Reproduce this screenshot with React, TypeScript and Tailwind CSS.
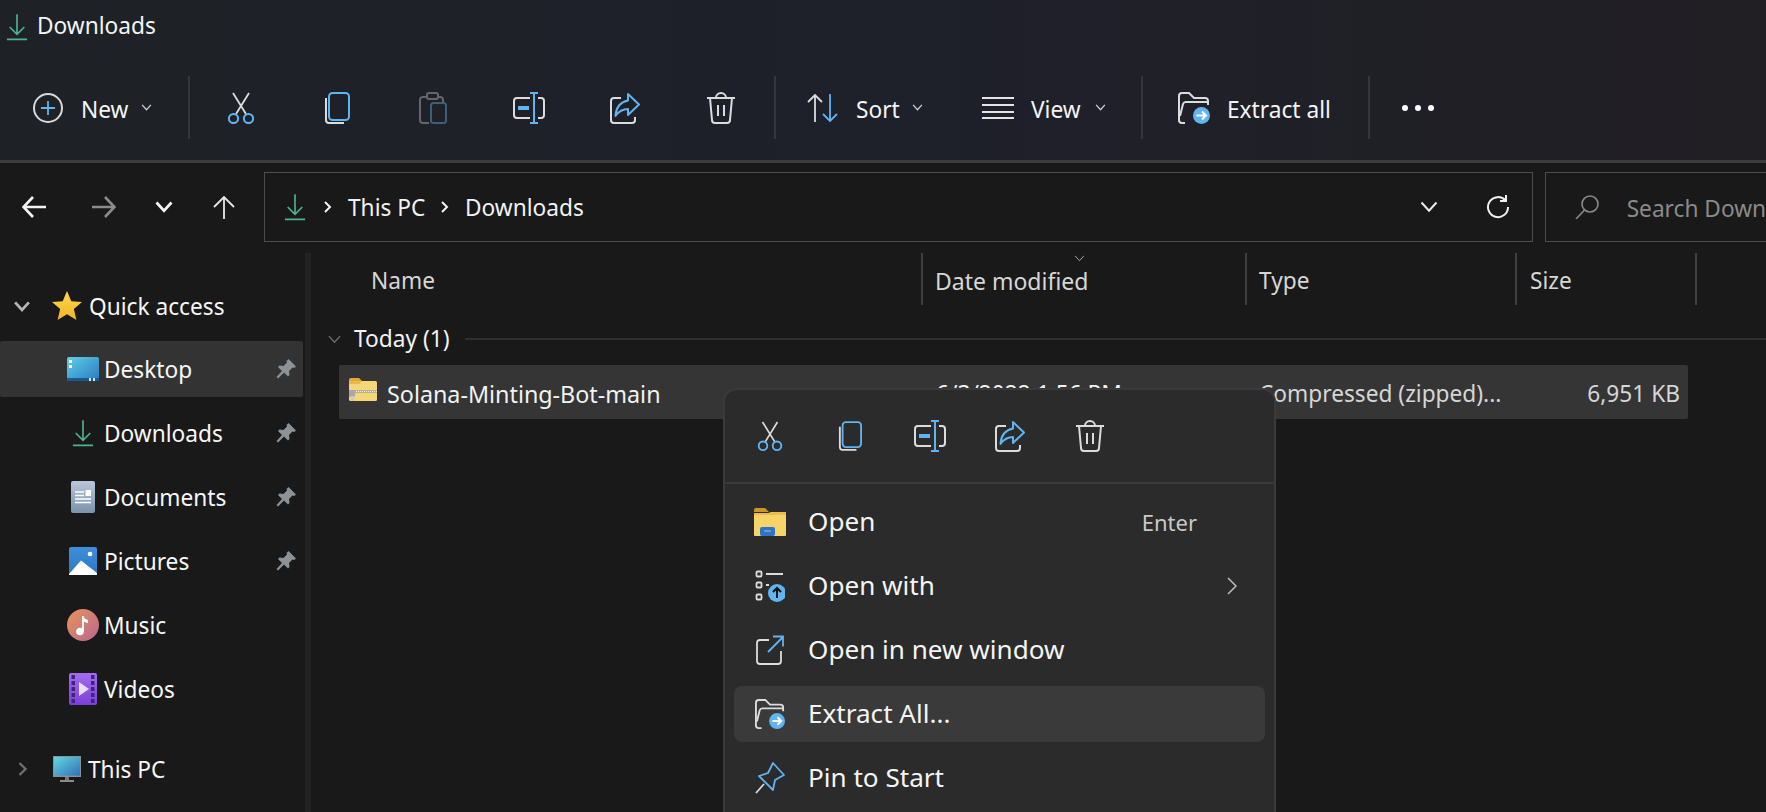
const WHITE = "#dcdcdc";
const BLUE = "#60b4f2";

type IconProps = { className?: string };

function CutIcon({ className }: IconProps) {
  return (
    <svg viewBox="0 0 30 32" className={className} fill="none" strokeWidth="1.8">
      <path d="M7 1l13 21M23 1L10 22" stroke={WHITE} />
      <circle cx="7.5" cy="26.5" r="4.6" stroke={BLUE} strokeWidth="2" />
      <circle cx="22.5" cy="26.5" r="4.6" stroke={BLUE} strokeWidth="2" />
    </svg>
  );
}

function CopyIcon({ className }: IconProps) {
  return (
    <svg viewBox="0 0 26 32" className={className} fill="none" strokeWidth="2">
      <path d="M2 6v22a3 3 0 0 0 3 3h15" stroke={WHITE} />
      <rect x="5" y="1" width="20" height="27" rx="3.5" stroke={BLUE} />
    </svg>
  );
}

function PasteIcon({ className }: IconProps) {
  return (
    <svg viewBox="0 0 28 32" className={className} fill="none" strokeWidth="2">
      <path d="M8 5H4a3 3 0 0 0-3 3v20a3 3 0 0 0 3 3h6M19 5h2a3 3 0 0 1 3 3v3" stroke="#63666a" />
      <rect x="8" y="1" width="11" height="6" rx="2" stroke="#63666a" />
      <rect x="12" y="11" width="15" height="20" rx="2.5" stroke="#3d6079" />
    </svg>
  );
}

function RenameIcon({ className }: IconProps) {
  return (
    <svg viewBox="0 0 32 32" className={className} fill="none" strokeWidth="2">
      <path d="M17 6H4a3 3 0 0 0-3 3v14a3 3 0 0 0 3 3h13M25 6h3a3 3 0 0 1 3 3v14a3 3 0 0 1-3 3h-3" stroke={WHITE} />
      <path d="M21 1v30M17 1h8M17 31h8" stroke={BLUE} />
      <rect x="5" y="14" width="11" height="4" fill={BLUE} />
    </svg>
  );
}

function ShareIcon({ className }: IconProps) {
  return (
    <svg viewBox="0 0 30 32" className={className} fill="none" strokeWidth="2">
      <path d="M11 6H4a3 3 0 0 0-3 3v19a3 3 0 0 0 3 3h18a3 3 0 0 0 3-3v-3" stroke={WHITE} />
      <path d="M18 2l11 10.500L18 23v-6c-6 0-9 2-12.500 7C6 16 10 10 18 8.500z" stroke={BLUE} strokeLinejoin="round" />
    </svg>
  );
}

function TrashIcon({ className }: IconProps) {
  return (
    <svg viewBox="0 0 30 32" className={className} fill="none" strokeWidth="2" stroke={WHITE}>
      <path d="M1 6h28M10 6a5 5 0 0 1 10 0M4 6l2 22a3 3 0 0 0 3 3h12a3 3 0 0 0 3-3l2-22M12 13v11M18 13v11" />
    </svg>
  );
}

function ExtractIcon({ className }: IconProps) {
  return (
    <svg viewBox="0 0 32 32" className={className} fill="none">
      <path d="M7 31H4a3 3 0 0 1-3-3V4a3 3 0 0 1 3-3h7l5 5h11a3 3 0 0 1 3 3v4" stroke={WHITE} strokeWidth="2" />
      <path d="M2 24l3-12a3 3 0 0 1 3-2h22" stroke={WHITE} strokeWidth="2" />
      <circle cx="23.500" cy="23.500" r="8.500" fill={BLUE} />
      <path d="M18.500 23.500h9M24 19.500l4 4-4 4" stroke="#fff" strokeWidth="2" />
    </svg>
  );
}

function DownloadIcon({ className }: IconProps) {
  return (
    <svg viewBox="0 0 24 30" className={className} fill="none" stroke="#4cb392" strokeWidth="1.8">
      <path d="M12 1v22M4 15l8 8 8-8M1 28.500h22" />
    </svg>
  );
}

function PinIcon() {
  return (
    <svg viewBox="0 0 22 22" className="h-[22px] w-[22px]" fill="#8d9296">
      <path d="M13.500 1l7.500 7.500-2 1.500-1.500-.5-3.500 3.500.5 4-1.500 1.500-4-4L3 20.500 1.500 19 7 13l-4-4 1.500-1.500 4 .5L12 4.500 11.500 3z" />
    </svg>
  );
}

function StarIcon() {
  return (
    <svg viewBox="0 0 28 28" className="h-[30px] w-[30px]">
      <defs>
        <linearGradient id="star" x1="0" y1="0" x2="0" y2="1">
          <stop offset="0" stopColor="#ffd84d" />
          <stop offset="1" stopColor="#f0b429" />
        </linearGradient>
      </defs>
      <path d="M14 0l4 9.500 10 .8-7.600 6.600 2.400 10.100L14 21.600 5.200 27l2.400-10.100L0 10.300l10-.8z" fill="url(#star)" />
    </svg>
  );
}

function DesktopIcon() {
  return (
    <svg viewBox="0 0 32 24" className="h-[24px] w-[32px]">
      <defs>
        <linearGradient id="desk" x1="0" y1="0" x2="1" y2="1">
          <stop offset="0" stopColor="#5fd0e6" />
          <stop offset="1" stopColor="#2a78c4" />
        </linearGradient>
      </defs>
      <rect width="32" height="24" rx="2" fill="url(#desk)" />
      <rect y="21" width="32" height="3" fill="#1b5a8c" />
      <rect x="2" y="3" width="3" height="3" fill="#fff" />
      <rect x="2" y="8" width="3" height="3" fill="#fff" />
      <rect x="22" y="21" width="2" height="3" fill="#cfe8f7" />
      <rect x="26" y="21" width="2" height="3" fill="#cfe8f7" />
    </svg>
  );
}

function DocumentsIcon() {
  return (
    <svg viewBox="0 0 24 32" className="h-[32px] w-[24px]">
      <defs>
        <linearGradient id="doc" x1="0" y1="0" x2="0" y2="1">
          <stop offset="0" stopColor="#b9c7da" />
          <stop offset="1" stopColor="#7c93ad" />
        </linearGradient>
      </defs>
      <rect width="24" height="32" rx="2" fill="url(#doc)" />
      <path d="M4 11h9M4 14.500h9M4 18h16M4 21.500h16" stroke="#fff" strokeWidth="1.600" />
      <rect x="14.500" y="9" width="5.500" height="6" fill="#fff" />
    </svg>
  );
}

function PicturesIcon() {
  return (
    <svg viewBox="0 0 28 28" className="h-[28px] w-[28px]">
      <defs>
        <linearGradient id="pic" x1="0" y1="0" x2="0" y2="1">
          <stop offset="0" stopColor="#3f8fdc" />
          <stop offset="1" stopColor="#2e74c0" />
        </linearGradient>
      </defs>
      <rect width="28" height="28" rx="2" fill="url(#pic)" />
      <path d="M0 27L12 13.500 28 26v2H0z" fill="#fff" />
      <circle cx="21" cy="7" r="2.300" fill="#fff" />
    </svg>
  );
}

function MusicIcon() {
  return (
    <svg viewBox="0 0 32 32" className="h-[32px] w-[32px]">
      <defs>
        <linearGradient id="mus" x1="0" y1="0" x2="1" y2="1">
          <stop offset="0" stopColor="#e8935a" />
          <stop offset="1" stopColor="#b8688f" />
        </linearGradient>
      </defs>
      <circle cx="16" cy="16" r="16" fill="url(#mus)" />
      <circle cx="13" cy="22.500" r="3.800" fill="#fff" />
      <path d="M15 22V7h1.800c.3 3 2.500 3.500 4.200 4v3c-1.800-.2-3-.8-4-1.600V22z" fill="#fff" />
    </svg>
  );
}

function VideosIcon() {
  return (
    <svg viewBox="0 0 28 32" className="h-[32px] w-[28px]">
      <defs>
        <linearGradient id="vid" x1="0" y1="0" x2="0" y2="1">
          <stop offset="0" stopColor="#a46cf0" />
          <stop offset="1" stopColor="#7a3fd8" />
        </linearGradient>
      </defs>
      <rect width="28" height="32" rx="2" fill="url(#vid)" />
      {[2, 8, 14, 20, 26].map((y) => (
        <g key={y} fill="#3c2480">
          <rect x="2.500" y={y} width="3.500" height="4" />
          <rect x="22" y={y} width="3.500" height="4" />
        </g>
      ))}
      <path d="M10 9l10 7-10 7z" fill="#e8defa" />
    </svg>
  );
}

function ThisPcIcon() {
  return (
    <svg viewBox="0 0 28 26" className="h-[26px] w-[28px]">
      <defs>
        <linearGradient id="pc" x1="0" y1="0" x2="1" y2="1">
          <stop offset="0" stopColor="#66d8e2" />
          <stop offset="1" stopColor="#2a72b8" />
        </linearGradient>
      </defs>
      <rect width="28" height="21" fill="#8b9097" />
      <rect x="1" y="1" width="26" height="18.500" fill="url(#pc)" />
      <rect x="12" y="21" width="4" height="3" fill="#777" />
      <rect x="7" y="24" width="14" height="2" fill="#8b8b8b" />
    </svg>
  );
}

function ZipFolderIcon() {
  return (
    <svg viewBox="0 0 28 23" className="h-[23px] w-[28px]">
      <path d="M0 2a2 2 0 0 1 2-2h8l3 3h-13z" fill="#e0a93a" />
      <rect y="3" width="28" height="20" rx="1.500" fill="#f6d777" />
      <path d="M0 3h13l-2.500 3H0z" fill="#eab94a" />
      <rect y="12" width="28" height="3" fill="#b8b09a" />
      <path d="M5 13.500h23" stroke="#efefe8" strokeWidth="1" strokeDasharray="1 1" />
      <rect y="12" width="6" height="7" rx="1" fill="#a8a8a8" />
      <rect x="2" y="18" width="3" height="5" fill="#c9c9c9" />
    </svg>
  );
}

function OpenFolderIcon() {
  return (
    <svg viewBox="0 0 32 28" className="h-[28px] w-[32px]">
      <path d="M0 2a2 2 0 0 1 2-2h9l4 4H0z" fill="#c9952f" />
      <rect y="5" width="32" height="23" rx="1" fill="#f7d469" />
      <path d="M0 5h14l3-1h15v3H0z" fill="#eebd47" />
      <rect x="6" y="19" width="15" height="9" rx="2" fill="#2f73c4" />
      <path d="M10 23h7" stroke="#9cc4ef" strokeWidth="1" />
    </svg>
  );
}

function OpenWithIcon() {
  return (
    <svg viewBox="0 0 30 32" className="h-[32px] w-[30px]" fill="none">
      <rect x="1.500" y="1.500" width="5" height="5" rx="1" stroke={WHITE} strokeWidth="1.800" />
      <rect x="1.500" y="12.500" width="5" height="5" rx="1" stroke={WHITE} strokeWidth="1.800" />
      <rect x="1.500" y="24.500" width="5" height="5" rx="1" stroke={WHITE} strokeWidth="1.800" />
      <path d="M11 4h17M11 15h3" stroke={WHITE} strokeWidth="1.800" />
      <circle cx="22" cy="23" r="9" fill={BLUE} />
      <path d="M22 28v-10M18 22l4-4 4 4" stroke="#101010" strokeWidth="2" />
    </svg>
  );
}

function NewWindowIcon() {
  return (
    <svg viewBox="0 0 28 30" className="h-[30px] w-[28px]" fill="none" strokeWidth="1.800">
      <path d="M13 5H4a3 3 0 0 0-3 3v18a3 3 0 0 0 3 3h18a3 3 0 0 0 3-3V16" stroke={WHITE} />
      <path d="M12 17L27 2M17 1.500h10v10" stroke={BLUE} />
    </svg>
  );
}

function PinStartIcon() {
  return (
    <svg viewBox="0 0 30 32" className="h-[32px] w-[30px]" fill="none" strokeWidth="1.800">
      <path d="M1 31l8-9" stroke={WHITE} />
      <path d="M18 1l11 12-9 5-2 10-14-14 9-3z" stroke={BLUE} strokeLinejoin="round" />
    </svg>
  );
}

function Chevron({ className, stroke = "#cfcfcf", width = 1.5 }: { className?: string; stroke?: string; width?: number }) {
  return (
    <svg viewBox="0 0 12 8" className={className} fill="none" stroke={stroke} strokeWidth={width}>
      <path d="M1 1l5 5.500L11 1" />
    </svg>
  );
}

function Separator({ className = "" }: { className?: string }) {
  return <div className={`h-[63px] w-[2px] bg-[#33363b] ${className}`} />;
}

function ToolButton({ children }: { children: React.ReactNode }) {
  return <div className="flex h-[63px] w-[96px] items-center justify-center">{children}</div>;
}

function Toolbar() {
  return (
    <div className="h-[160px] bg-linear-to-r from-[#1e2226] via-[#1e202a] to-[#211f24] text-[22.7px] text-[#f4f4f4]">
      <div className="flex h-[54px] items-center pl-[6px]">
        <DownloadIcon className="h-[30px] w-[22px]" />
        <span className="ml-[9px] -mt-[1px]">Downloads</span>
      </div>
      <div className="mt-[22px] flex h-[63px] items-center">
        <div className="ml-[33px] flex h-[30px] w-[30px] items-center justify-center rounded-full border-2 border-[#d8d8d8]">
          <svg viewBox="0 0 14 14" className="h-[14px] w-[14px]" fill="none" stroke={BLUE} strokeWidth="1.800">
            <path d="M7 0v14M0 7h14" />
          </svg>
        </div>
        <span className="ml-[18px] mt-[6px] w-[50px]">New</span>
        <Chevron className="ml-[10px] h-[7px] w-[11px]" />
        <Separator className="ml-[36px]" />
        <div className="ml-[3px] flex">
          <ToolButton><CutIcon className="h-[32px] w-[30px]" /></ToolButton>
          <ToolButton><CopyIcon className="h-[32px] w-[26px]" /></ToolButton>
          <ToolButton><PasteIcon className="h-[32px] w-[28px]" /></ToolButton>
          <ToolButton><RenameIcon className="h-[32px] w-[32px]" /></ToolButton>
          <ToolButton><ShareIcon className="h-[32px] w-[30px]" /></ToolButton>
          <ToolButton><TrashIcon className="h-[32px] w-[30px]" /></ToolButton>
        </div>
        <Separator className="ml-[5px]" />
        <svg viewBox="0 0 32 30" className="ml-[31px] h-[30px] w-[32px]" fill="none" strokeWidth="1.800">
          <path d="M8 29V2M1 9l7-7 7 7" stroke={WHITE} />
          <path d="M23 1v27M16 21l7 7 7-7" stroke={BLUE} />
        </svg>
        <span className="ml-[17px] mt-[6px] w-[45px]">Sort</span>
        <Chevron className="ml-[11px] h-[7px] w-[11px]" />
        <svg viewBox="0 0 32 22" className="ml-[59px] h-[22px] w-[32px]" stroke="#e4e4e4" strokeWidth="2">
          <path d="M0 1h32M0 8h32M0 15h32M0 21h32" />
        </svg>
        <span className="ml-[17px] mt-[6px] w-[51px]">View</span>
        <Chevron className="ml-[13px] h-[7px] w-[11px]" />
        <Separator className="ml-[35px]" />
        <ExtractIcon className="ml-[35px] h-[32px] w-[32px]" />
        <span className="ml-[17px] mt-[6px] w-[104px] whitespace-nowrap">Extract all</span>
        <Separator className="ml-[37px]" />
        <div className="ml-[32px] flex gap-[7px]">
          <div className="h-[6px] w-[6px] rounded-full bg-white" />
          <div className="h-[6px] w-[6px] rounded-full bg-white" />
          <div className="h-[6px] w-[6px] rounded-full bg-white" />
        </div>
      </div>
    </div>
  );
}

function AddressRow() {
  return (
    <div className="flex h-[93px] flex-none items-center border-t-[3px] border-[#3d3d3d] bg-[#191919] pb-[2px] text-[22.7px] text-[#f2f2f2]">
      <svg viewBox="0 0 24 22" className="ml-[22px] h-[22px] w-[24px]" fill="none" stroke="#f4f4f4" strokeWidth="2.600">
        <path d="M24 11H2M11 1L1.500 11 11 21" />
      </svg>
      <svg viewBox="0 0 24 22" className="ml-[46px] h-[22px] w-[24px]" fill="none" stroke="#8c8c8c" strokeWidth="2.600">
        <path d="M0 11h22M13 1l9.500 10L13 21" />
      </svg>
      <Chevron className="ml-[39px] h-[12px] w-[18px]" stroke="#f4f4f4" width={1.8} />
      <svg viewBox="0 0 22 24" className="ml-[40px] h-[24px] w-[22px]" fill="none" stroke="#e8e8e8" strokeWidth="1.800">
        <path d="M11 24V2M1 12L11 2l10 10" />
      </svg>
      <div className="ml-[29px] flex h-[70px] w-[1269px] items-center border border-[#4d4d4d]">
        <DownloadIcon className="ml-[19px] h-[28px] w-[22px]" />
        <svg viewBox="0 0 8 12" className="ml-[18px] h-[12px] w-[8px]" fill="none" stroke="#f4f4f4" strokeWidth="2">
          <path d="M1 1l5 5-5 5" />
        </svg>
        <span className="ml-[16px] mt-[2px] w-[78px] whitespace-nowrap">This PC</span>
        <svg viewBox="0 0 8 12" className="ml-[15px] h-[12px] w-[8px]" fill="none" stroke="#f4f4f4" strokeWidth="2">
          <path d="M1 1l5 5-5 5" />
        </svg>
        <span className="ml-[16px] mt-[2px]">Downloads</span>
        <Chevron className="ml-auto h-[12px] w-[18px]" stroke="#ededed" width={1.3} />
        <svg viewBox="0 0 24 24" className="ml-[48px] mr-[22px] h-[24px] w-[24px]" fill="none" stroke="#f0f0f0" strokeWidth="2">
          <path d="M19.500 5.500A10 10 0 1 0 22 12M20 0v6h-6" />
        </svg>
      </div>
      <div className="ml-[12px] flex h-[70px] flex-1 items-center border-y border-l border-[#4d4d4d]">
        <svg viewBox="0 0 24 24" className="ml-[29px] h-[24px] w-[24px]" fill="none" stroke="#8a8a8a" strokeWidth="1.600">
          <circle cx="15" cy="9" r="8" />
          <path d="M9.500 15L1 24" />
        </svg>
        <span className="ml-[28px] mt-[4px] whitespace-nowrap text-[#8a8a8a]">Search Down</span>
      </div>
    </div>
  );
}

type NavItem = { label: string; icon: React.ReactNode; pinned?: boolean; selected?: boolean };

const NAV_ITEMS: NavItem[] = [
  { label: "Desktop", icon: <DesktopIcon />, pinned: true, selected: true },
  { label: "Downloads", icon: <DownloadIcon className="h-[30px] w-[22px]" />, pinned: true },
  { label: "Documents", icon: <DocumentsIcon />, pinned: true },
  { label: "Pictures", icon: <PicturesIcon />, pinned: true },
  { label: "Music", icon: <MusicIcon /> },
  { label: "Videos", icon: <VideosIcon /> },
];

function Sidebar() {
  return (
    <div className="flex h-full w-[305px] flex-none flex-col pt-[25px] text-[22.7px] text-[#f6f6f6]">
      <div className="flex h-[56px] items-center">
        <Chevron className="ml-[13px] h-[11px] w-[18px]" stroke="#b5b5b5" width={2} />
        <div className="ml-[21px] flex"><StarIcon /></div>
        <span className="ml-[7px] mt-[2px]">Quick access</span>
      </div>
      <div className="mt-[7px] flex flex-col gap-[8px]">
        {NAV_ITEMS.map((item) => (
          <div
            key={item.label}
            className={`flex h-[56px] w-[303px] items-center rounded-[2px] ${item.selected ? "bg-[#333333]" : ""}`}
          >
            <div className="flex w-[104px] justify-start pl-[61px]">
              <div className="flex w-[44px] flex-none justify-center">{item.icon}</div>
            </div>
            <span className="mt-[2px]">{item.label}</span>
            {item.pinned && (
              <div className="ml-auto mr-[6px]"><PinIcon /></div>
            )}
          </div>
        ))}
      </div>
      <div className="mt-[24px] flex h-[56px] items-center">
        <svg viewBox="0 0 10 14" className="ml-[18px] h-[14px] w-[10px]" fill="none" stroke="#6e6e6e" strokeWidth="2.400">
          <path d="M1.500 1l6 6-6 6" />
        </svg>
        <div className="ml-[25px]"><ThisPcIcon /></div>
        <span className="ml-[7px] mt-[2px]">This PC</span>
      </div>
    </div>
  );
}

function FileList() {
  return (
    <div className="relative flex-1 text-[22.7px] text-[#f2f2f2]">
      <div className="flex h-[52px] items-stretch text-[#d6d6d6]">
        <div className="flex w-[612px] items-center border-r-2 border-[#3f3f3f] pl-[60px] pt-[4px]">Name</div>
        <div className="relative flex w-[324px] items-center border-r-2 border-[#3f3f3f] pl-[12px] pt-[4px] text-[23px]">
          Date modified
          <Chevron className="absolute left-[150px] top-[2px] h-[7px] w-[13px]" stroke="#b8b8b8" width={1} />
        </div>
        <div className="flex w-[270px] items-center border-r-2 border-[#3f3f3f] pl-[12px] pt-[4px]">Type</div>
        <div className="flex w-[180px] items-center border-r-2 border-[#3f3f3f] pl-[13px] pt-[4px]">Size</div>
      </div>
      <div className="mt-[12px] flex h-[44px] items-center">
        <Chevron className="ml-[15px] h-[9px] w-[17px]" stroke="#6f6f6f" width={1.2} />
        <span className="ml-[11px]">Today (1)</span>
        <div className="ml-[15px] h-[2px] flex-1 bg-[#2f2f2f]" />
      </div>
      <div className="ml-[28px] mt-[4px] flex h-[54px] w-[1349px] items-center rounded-[2px] bg-[#353535] pt-[4px]">
        <div className="ml-[10px] mb-[10px]"><ZipFolderIcon /></div>
        <span className="ml-[10px] w-[549px] text-[23.3px]">Solana-Minting-Bot-main</span>
        <span className="w-[323px] whitespace-nowrap">6/3/2022 1:56 PM</span>
        <span className="w-[235px] whitespace-nowrap text-[#d6d6d6]">Compressed (zipped)...</span>
        <span className="ml-auto mr-[8px] whitespace-nowrap text-[#d6d6d6]">6,951 KB</span>
      </div>
    </div>
  );
}

type MenuItem = { label: string; icon: React.ReactNode; hint?: string; arrow?: boolean; active?: boolean };

const MENU_ITEMS: MenuItem[] = [
  { label: "Open", icon: <OpenFolderIcon />, hint: "Enter" },
  { label: "Open with", icon: <OpenWithIcon />, arrow: true },
  { label: "Open in new window", icon: <NewWindowIcon /> },
  { label: "Extract All...", icon: <ExtractIcon className="h-[30px] w-[32px]" />, active: true },
  { label: "Pin to Start", icon: <PinStartIcon /> },
];

function ContextMenu() {
  return (
    <div className="absolute left-[723px] top-[388px] h-[440px] w-[553px] rounded-[14px] border-2 border-[#3a3a3a] bg-[#2b2b2b] text-[26.100px] text-[#f4f4f4]">
      <div className="flex h-[94px] items-center border-b-2 border-[#3a3a3a] pl-[5px]">
        <div className="flex w-[80px] justify-center"><CutIcon className="h-[32px] w-[28px]" /></div>
        <div className="flex w-[80px] justify-center"><CopyIcon className="h-[32px] w-[24px]" /></div>
        <div className="flex w-[80px] justify-center"><RenameIcon className="h-[32px] w-[32px]" /></div>
        <div className="flex w-[80px] justify-center"><ShareIcon className="h-[32px] w-[30px]" /></div>
        <div className="flex w-[80px] justify-center"><TrashIcon className="h-[32px] w-[30px]" /></div>
      </div>
      <div className="mx-[9px] mt-[10px] flex flex-col gap-[8px]">
        {MENU_ITEMS.map((item) => (
          <div
            key={item.label}
            className={`flex h-[56px] items-center rounded-[8px] ${item.active ? "bg-[#3a3a3a]" : ""}`}
          >
            <div className="flex w-[74px] flex-none justify-center pr-[2px]">{item.icon}</div>
            <span>{item.label}</span>
            {item.hint && <span className="ml-auto mr-[68px] text-[22px] text-[#c8c8c8]">{item.hint}</span>}
            {item.arrow && (
              <svg viewBox="0 0 10 18" className="ml-auto mr-[28px] h-[18px] w-[10px]" fill="none" stroke="#c0c0c0" strokeWidth="1.500">
                <path d="M1 1l8 8-8 8" />
              </svg>
            )}
          </div>
        ))}
      </div>
    </div>
  );
}

export default function App() {
  return (
    <div
      className="relative flex h-[812px] w-[1766px] flex-col overflow-hidden bg-[#191919]"
      style={{ fontFamily: '"Noto Sans", sans-serif' }}
    >
      <Toolbar />
      <AddressRow />
      <div className="flex flex-1">
        <Sidebar />
        <div className="w-[6px] flex-none bg-[#222222]" />
        <FileList />
      </div>
      <ContextMenu />
    </div>
  );
}
